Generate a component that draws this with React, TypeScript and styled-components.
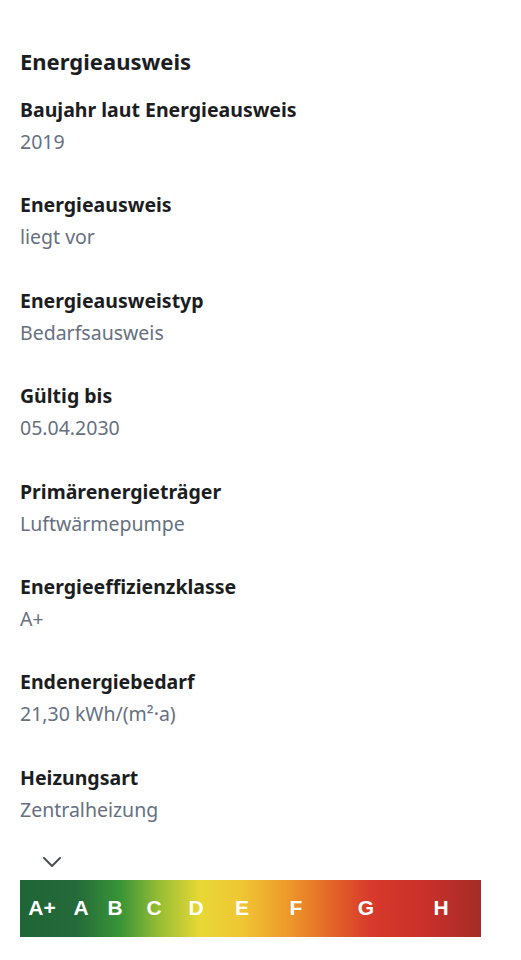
import React from "react";
import styled, { createGlobalStyle } from "styled-components";

const GlobalStyle = createGlobalStyle`
  html, body {
    margin: 0;
    padding: 0;
    background: #ffffff;
  }
  body {
    font-family: "Noto Sans", "Open Sans", sans-serif;
    -webkit-font-smoothing: antialiased;
  }
`;

const facts = [
  { label: "Baujahr laut Energieausweis", value: "2019" },
  { label: "Energieausweis", value: "liegt vor" },
  { label: "Energieausweistyp", value: "Bedarfsausweis" },
  { label: "Gültig bis", value: "05.04.2030" },
  { label: "Primärenergieträger", value: "Luftwärmepumpe" },
  { label: "Energieeffizienzklasse", value: "A+" },
  { label: "Endenergiebedarf", value: "21,30 kWh/(m²·a)" },
  { label: "Heizungsart", value: "Zentralheizung" },
];

const classes = [
  { name: "A+", width: 44 },
  { name: "A", width: 34 },
  { name: "B", width: 34 },
  { name: "C", width: 44 },
  { name: "D", width: 40 },
  { name: "E", width: 52 },
  { name: "F", width: 56 },
  { name: "G", width: 84 },
  { name: "H", width: 66 },
];

export default function App() {
  return (
    <>
      <GlobalStyle />
      <Page>
        <Title>Energieausweis</Title>
        <FactList>
          {facts.map((f) => (
            <Fact key={f.label}>
              <Label>{f.label}</Label>
              <Value>{f.value}</Value>
            </Fact>
          ))}
        </FactList>
        <Scale>
          <Marker>
            <svg width="20" height="12" viewBox="0 0 20 12">
              <path d="M2 2 L10 10 L18 2" fill="none" stroke="#4a4f55" strokeWidth="2" strokeLinecap="round" strokeLinejoin="round" />
            </svg>
          </Marker>
          <Bar>
            {classes.map((c) => (
              <ClassCell key={c.name} $width={c.width}>
                {c.name}
              </ClassCell>
            ))}
          </Bar>
        </Scale>
      </Page>
    </>
  );
}

const Page = styled.div`
  padding: 46px 20px 0 20px;
  width: 521px;
  box-sizing: border-box;
`;

const Title = styled.h2`
  margin: 0;
  font-size: 22px;
  line-height: 30px;
  font-weight: 700;
  color: #1c1d1f;
`;

const FactList = styled.div`
  display: flex;
  flex-direction: column;
  gap: 31.4px;
  margin-top: 18px;
`;

const Fact = styled.div`
  display: flex;
  flex-direction: column;
`;

const Label = styled.div`
  font-size: 19.5px;
  line-height: 32px;
  font-weight: 700;
  color: #1c1d1f;
`;

const Value = styled.div`
  font-size: 19.5px;
  line-height: 32px;
  font-weight: 400;
  color: #667080;
`;

const Scale = styled.div`
  margin-top: 24px;
  display: flex;
  flex-direction: column;
`;

const Marker = styled.div`
  height: 30px;
  box-sizing: border-box;
  padding: 6px 0 0 22px;
  display: flex;
  align-items: flex-start;
`;

const Bar = styled.div`
  width: 461px;
  height: 57px;
  display: flex;
  align-items: center;
  background: linear-gradient(
    to right,
    #1f6535 0%,
    #23693a 12%,
    #3a9537 22%,
    #95bd34 30%,
    #e7d834 39%,
    #f0c634 48%,
    #ee9a2a 58%,
    #e26328 68%,
    #d83a2b 76%,
    #c9302a 88%,
    #a52c26 100%
  );
`;

const ClassCell = styled.div<{ $width: number }>`
  width: ${(p) => p.$width}px;
  text-align: center;
  font-family: "Liberation Sans", Arial, sans-serif;
  font-weight: 700;
  font-size: 21px;
  color: #ffffff;
`;
